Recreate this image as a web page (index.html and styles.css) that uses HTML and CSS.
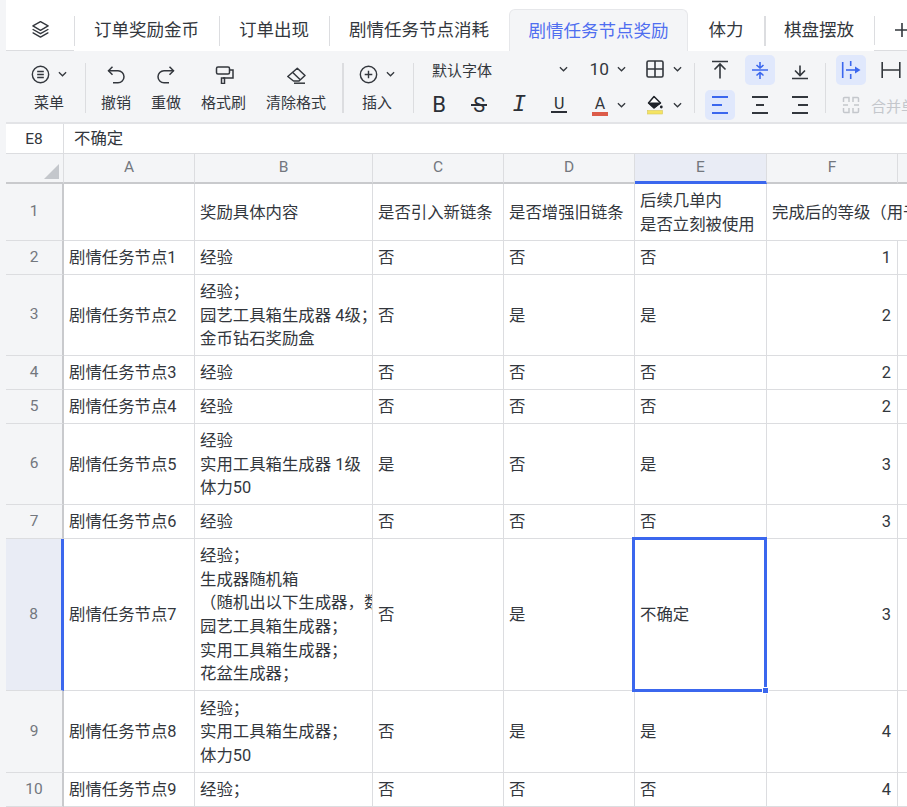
FILE: index.html
```html
<!DOCTYPE html>
<html lang="zh-CN">

<head>
    <meta charset="UTF-8">
    <title>剧情任务节点奖励</title>
    <link rel="stylesheet" href="styles.css">
</head>

<body>
    <div class="app">
        <!-- sheet tabs -->
        <div class="tabs">
            <div class="tab-icon">
                <svg width="19" height="19" viewBox="0 0 20 20" fill="none" stroke="#33373d" stroke-width="1.5" stroke-linejoin="round" stroke-linecap="round">
                    <path d="M10 1.800 18 6.300 10 10.800 2 6.300Z"/>
                    <path d="M2.200 10 10 14.400 17.800 10"/>
                    <path d="M2.200 13.600 10 18 17.800 13.600"/>
                </svg>
            </div>
            <div class="tab">订单奖励金币</div>
            <div class="tab">订单出现</div>
            <div class="tab">剧情任务节点消耗</div>
            <div class="tab active">剧情任务节点奖励</div>
            <div class="tab tab-short">体力</div>
            <div class="tab tab-thick">棋盘摆放</div>
            <div class="tab tab-add">
                <svg width="14" height="14" viewBox="0 0 14 14" stroke="#33373d" stroke-width="1.6"><path d="M7 0v14M0 7h14"/></svg>
            </div>
        </div>

        <!-- toolbar -->
        <div class="toolbar">
            <div class="tool-group">
                <div class="tool-big">
                    <div class="tool-top">
                        <svg width="19" height="19" viewBox="0 0 20 20" fill="none" stroke="#33373d" stroke-width="1.5"><circle cx="10" cy="10" r="8.600"/><path d="M6.500 6.800h7M6.500 10h7M6.500 13.200h7"/></svg>
                        <svg class="caret" width="9" height="6" viewBox="0 0 10 6"><path d="M1 1l4 4 4-4"/></svg>
                    </div>
                    <span>菜单</span>
                </div>
            </div>
            <div class="sep"></div>
            <div class="tool-group gap-20">
                <div class="tool-big">
                    <div class="tool-top">
                        <svg width="20" height="20" viewBox="0 0 20 20" fill="none" stroke="#33373d" stroke-width="1.500"><path d="M6.500 2.700 2.500 6.700 6.500 10.700"/><path d="M2.500 6.700H12a6 6 0 0 1 0 12H7"/></svg>
                    </div>
                    <span>撤销</span>
                </div>
                <div class="tool-big">
                    <div class="tool-top">
                        <svg width="20" height="20" viewBox="0 0 20 20" fill="none" stroke="#33373d" stroke-width="1.500"><path d="M13.500 2.700l4 4-4 4"/><path d="M17.500 6.700H8a6 6 0 0 0 0 12h5"/></svg>
                    </div>
                    <span>重做</span>
                </div>
                <div class="tool-big">
                    <div class="tool-top">
                        <svg width="20" height="20" viewBox="0 0 20 20" fill="none" stroke="#33373d" stroke-width="1.500"><rect x="2.500" y="3" width="13" height="7" rx="1.500"/><path d="M15.500 6H19v8H9"/><path d="M7.500 14h3v5.500h-3Z"/></svg>
                    </div>
                    <span>格式刷</span>
                </div>
                <div class="tool-big">
                    <div class="tool-top">
                        <svg width="20" height="20" viewBox="0 0 20 20" fill="none" stroke="#33373d" stroke-width="1.500" stroke-linejoin="round"><path d="M11.300 4.300 19 11.500 13 17H7.500L1.800 12.500Z"/><path d="M6.500 8.300l7.500 7.200"/><path d="M8 19.200h11"/></svg>
                    </div>
                    <span>清除格式</span>
                </div>
            </div>
            <div class="sep sep-thick"></div>
            <div class="tool-group">
                <div class="tool-big">
                    <div class="tool-top">
                        <svg width="19" height="19" viewBox="0 0 20 20" fill="none" stroke="#33373d" stroke-width="1.500"><circle cx="10" cy="10" r="8.600"/><path d="M10 6v8M6 10h8"/></svg>
                        <svg class="caret" width="9" height="6" viewBox="0 0 10 6"><path d="M1 1l4 4 4-4"/></svg>
                    </div>
                    <span>插入</span>
                </div>
            </div>
            <div class="sep"></div>

            <!-- font controls -->
            <div class="font-tools">
                <div class="font-row">
                    <div class="font-name">默认字体
                        <svg class="caret" width="9" height="6" viewBox="0 0 10 6"><path d="M1 1l4 4 4-4"/></svg>
                    </div>
                    <div class="font-size">10
                        <svg class="caret" width="9" height="6" viewBox="0 0 10 6"><path d="M1 1l4 4 4-4"/></svg>
                    </div>
                    <div class="font-border">
                        <svg width="18" height="18" viewBox="0 0 18 18" fill="none" stroke="#33373d" stroke-width="1.600"><rect x="1" y="1" width="16" height="16" rx="1.500"/><path d="M9 1v16M1 9h16"/></svg>
                        <svg class="caret" width="9" height="6" viewBox="0 0 10 6"><path d="M1 1l4 4 4-4"/></svg>
                    </div>
                </div>
                <div class="font-row font-row-2">
                    <span class="glyph glyph-b">B</span>
                    <span class="glyph glyph-s">S</span>
                    <span class="glyph glyph-i">I</span>
                    <span class="glyph glyph-u">U</span>
                    <div class="color-btn">
                        <span class="color-a">A</span>
                        <svg class="caret" width="9" height="6" viewBox="0 0 10 6"><path d="M1 1l4 4 4-4"/></svg>
                    </div>
                    <div class="color-btn fill-btn">
                        <svg width="16" height="20" viewBox="0 0 16 20"><path d="M7 1.500 13.500 8 7 13 1.500 8Z" fill="#fff" stroke="#1f2329" stroke-width="1.500" stroke-linejoin="round"/><path d="M1.500 8h12L7 13Z" fill="#1f2329" stroke="#1f2329"/><circle cx="14.300" cy="12" r="1.400" fill="#1f2329"/><rect x=".5" y="15.500" width="15" height="3.500" fill="#f5e462" stroke="#d8c95a" stroke-width=".6"/></svg>
                        <svg class="caret" width="9" height="6" viewBox="0 0 10 6"><path d="M1 1l4 4 4-4"/></svg>
                    </div>
                </div>
            </div>
            <div class="sep"></div>

            <!-- alignment -->
            <div class="align-tools">
                <div class="icon-btn">
                    <svg width="18" height="20" viewBox="0 0 18 20" fill="none" stroke="#33373d" stroke-width="1.600"><path d="M1 1.500h16M9 18.500V4M3.500 9.500 9 4l5.500 5.500"/></svg>
                </div>
                <div class="icon-btn on">
                    <svg width="18" height="20" viewBox="0 0 18 20" fill="none" stroke="#3b67ee" stroke-width="1.600"><path d="M1 10h16M9 2v6M5.500 5 9 8l3.500-3M9 19v-6.500M5.500 15.500 9 12.500l3.500 3"/></svg>
                </div>
                <div class="icon-btn">
                    <svg width="18" height="20" viewBox="0 0 18 20" fill="none" stroke="#33373d" stroke-width="1.600"><path d="M1 18.500h16M9 5.500v10M4 10.500l5 5 5-5"/></svg>
                </div>
                <div class="icon-btn on">
                    <svg width="18" height="18" viewBox="0 0 18 18" fill="none" stroke="#3b67ee" stroke-width="1.800"><path d="M1 1h16M1 9h10M1 17h16"/></svg>
                </div>
                <div class="icon-btn">
                    <svg width="18" height="18" viewBox="0 0 18 18" fill="none" stroke="#33373d" stroke-width="1.800"><path d="M1 1h16M5 9h8M1 17h16"/></svg>
                </div>
                <div class="icon-btn">
                    <svg width="18" height="18" viewBox="0 0 18 18" fill="none" stroke="#33373d" stroke-width="1.800"><path d="M1 1h16M7 9h10M1 17h16"/></svg>
                </div>
            </div>
            <div class="sep"></div>

            <!-- wrap and merge -->
            <div class="wrap-tools">
                <div class="wrap-row">
                    <div class="icon-btn on">
                        <svg width="20" height="20" viewBox="0 0 20 20" fill="none" stroke="#3b67ee" stroke-width="1.600"><path d="M1.700 2v16M9.700 1v5M9.700 14v5"/><path d="M5 10h10"/><path d="M14 6.500 19.500 10 14 13.500Z" fill="#3b67ee" stroke="none"/></svg>
                    </div>
                    <div class="icon-btn">
                        <svg width="20" height="20" viewBox="0 0 20 20" fill="none" stroke="#33373d" stroke-width="1.600"><path d="M1.200 2v16M18.800 2v16M1.200 10h17.600"/></svg>
                    </div>
                </div>
                <div class="merge-row">
                    <svg width="18" height="18" viewBox="0 0 18 18" fill="none" stroke="#c4c7cc" stroke-width="1.500"><path d="M7 6V1.500H2.500a1 1 0 0 0-1 1V6M11 6V1.500h4.500a1 1 0 0 1 1 1V6M7 12v4.500H2.500a1 1 0 0 1-1-1V12M11 12v4.500h4.500a1 1 0 0 0 1-1V12M1 9h5M12 9h5"/></svg>
                    <span>合并单元格</span>
                </div>
            </div>
        </div>

        <!-- formula bar -->
        <div class="formula-bar">
            <div class="cell-name">E8</div>
            <div class="formula">不确定</div>
        </div>

        <!-- sheet -->
        <div class="sheet">
            <table>
                <colgroup>
                    <col class="col-head"><col class="col-a"><col class="col-b"><col class="col-c"><col class="col-d"><col class="col-e"><col class="col-f"><col class="col-g">
                </colgroup>
                <thead>
                    <tr>
                        <th class="corner"><div class="corner-mark"></div></th>
                        <th>A</th><th>B</th><th>C</th><th>D</th><th class="cur-col">E</th><th>F</th><th></th>
                    </tr>
                </thead>
                <tbody>
                    <tr class="h-57">
                        <th>1</th><td></td><td>奖励具体内容</td><td>是否引入新链条</td><td>是否增强旧链条</td>
                        <td>后续几单内<br>是否立刻被使用</td>
                        <td colspan="2">完成后的等级（用于判断解锁）</td>
                    </tr>
                    <tr class="h-34">
                        <th>2</th><td>剧情任务节点1</td><td>经验</td><td>否</td><td>否</td><td>否</td><td class="num">1</td><td></td>
                    </tr>
                    <tr class="h-81">
                        <th>3</th><td>剧情任务节点2</td><td>经验；<br>园艺工具箱生成器 4级；<br>金币钻石奖励盒</td><td>否</td><td>是</td><td>是</td><td class="num">2</td><td></td>
                    </tr>
                    <tr class="h-34">
                        <th>4</th><td>剧情任务节点3</td><td>经验</td><td>否</td><td>否</td><td>否</td><td class="num">2</td><td></td>
                    </tr>
                    <tr class="h-34">
                        <th>5</th><td>剧情任务节点4</td><td>经验</td><td>否</td><td>否</td><td>否</td><td class="num">2</td><td></td>
                    </tr>
                    <tr class="h-81">
                        <th>6</th><td>剧情任务节点5</td><td>经验<br>实用工具箱生成器 1级<br>体力50</td><td>是</td><td>否</td><td>是</td><td class="num">3</td><td></td>
                    </tr>
                    <tr class="h-34">
                        <th>7</th><td>剧情任务节点6</td><td>经验</td><td>否</td><td>否</td><td>否</td><td class="num">3</td><td></td>
                    </tr>
                    <tr class="h-152">
                        <th class="cur-row">8</th><td>剧情任务节点7</td>
                        <td>经验；<br>生成器随机箱<br>（随机出以下生成器，数量随机）<br>园艺工具箱生成器；<br>实用工具箱生成器；<br>花盆生成器；</td>
                        <td>否</td><td>是</td>
                        <td class="selected">不确定<div class="sel-frame"><div class="fill-handle"></div></div></td>
                        <td class="num">3</td><td></td>
                    </tr>
                    <tr class="h-82">
                        <th>9</th><td>剧情任务节点8</td><td>经验；<br>实用工具箱生成器；<br>体力50</td><td>否</td><td>是</td><td>是</td><td class="num">4</td><td></td>
                    </tr>
                    <tr class="h-34">
                        <th>10</th><td>剧情任务节点9</td><td>经验；</td><td>否</td><td>否</td><td>否</td><td class="num">4</td><td></td>
                    </tr>
                </tbody>
            </table>
        </div>
    </div>
</body>

</html>
```

FILE: styles.css
```css
/* Basic reset */
* {
    margin: 0;
    padding: 0;
    box-sizing: border-box;
}

:root {
    --panel: #f4f5f7;
    --line: #dcdde0;
    --text: #33373d;
    --blue: #3b67ee;
    --blue-soft: #e0e8fc;
}

html,
body {
    height: 100%;
    overflow: hidden;
}

body {
    font-family: Roboto, "Noto Sans CJK SC", sans-serif;
    color: var(--text);
    background: #fff;
}

.app {
    width: 907px;
    height: 807px;
    background: #fff;
    border-left: 6px solid var(--panel);
    overflow: hidden;
}

/* Tabs */
.tabs {
    display: flex;
    align-items: stretch;
    height: 51px;
    padding-top: 9px;
    overflow: hidden;
}

.tab-icon {
    width: 68px;
    flex-shrink: 0;
    display: flex;
    align-items: center;
    justify-content: center;
    border-bottom: 1px solid var(--line);
}

.tab {
    position: relative;
    flex-shrink: 0;
    display: flex;
    align-items: center;
    justify-content: center;
    font-size: 17.5px;
    padding: 2px 20px 0;
    white-space: nowrap;
    line-height: 1;
}

.tab::before {
    content: "";
    position: absolute;
    left: 0;
    top: 7px;
    bottom: 5px;
    width: 1px;
    background: var(--line);
}

.tab.active {
    color: #4f6ef0;
    background: var(--panel);
    border: 1px solid #e6e7ea;
    border-bottom: none;
    border-radius: 6px 6px 0 0;
    padding: 2px 18.5px 0;
}

.tab.active::before,
.tab-short::before {
    display: none;
}

.tab-short {
    padding: 2px 20.5px 0;
}

.tab-thick::before {
    width: 2px;
}

.tab-add {
    padding: 0 0 0 21px;
    justify-content: flex-start;
    flex: 1 0 auto;
    border-bottom: 1px solid var(--line);
}

/* Toolbar */
.toolbar {
    display: flex;
    align-items: flex-start;
    height: 73px;
    background: var(--panel);
    border-bottom: 2px solid #e3e4e7;
    padding-left: 25px;
    padding-top: 12px;
    white-space: nowrap;
    overflow: hidden;
}

.tool-group {
    display: flex;
    flex-shrink: 0;
}

.gap-20 {
    gap: 20px;
}

.tool-big {
    display: flex;
    flex-direction: column;
    align-items: center;
    font-size: 15px;
    line-height: 20px;
}

.tool-top {
    height: 22px;
    display: flex;
    align-items: center;
    gap: 8px;
    margin-bottom: 8px;
}

.caret {
    fill: none;
    stroke: #33373d;
    stroke-width: 1.4;
    flex-shrink: 0;
}

.sep {
    width: 1px;
    height: 50px;
    margin: 0 15px 0 18px;
    background: #dcdde0;
    flex-shrink: 0;
}

.sep-thick {
    width: 2px;
    margin-left: 16px;
}

/* Font controls */
.font-tools {
    width: 250px;
    flex-shrink: 0;
    margin: -5px -6px 0 3px;
}

.font-row {
    display: flex;
    align-items: center;
    height: 22px;
    font-size: 15px;
}

.font-name {
    width: 136px;
    display: flex;
    align-items: center;
    justify-content: space-between;
}

.font-size {
    width: 58px;
    display: flex;
    align-items: center;
    justify-content: flex-end;
    gap: 8px;
    font-size: 17.33px;
}

.font-border {
    width: 56px;
    display: flex;
    align-items: center;
    justify-content: flex-end;
    gap: 9px;
}

.font-row-2 {
    margin: 13px 0 0 -13px;
    height: 24px;
}

.glyph {
    position: relative;
    width: 40px;
    text-align: center;
    font-size: 16px;
    line-height: 24px;
    color: #2b2f36;
}

.glyph-b {
    font-size: 22px;
}

.glyph-s {
    font-size: 20px;
}

.glyph-s::after {
    content: "";
    position: absolute;
    left: 12px;
    width: 16px;
    top: 11px;
    height: 1.5px;
    background: #2b2f36;
}

.glyph-i {
    font-family: "Liberation Mono", monospace;
    font-style: italic;
    font-size: 23px;
}

.glyph-u {
    line-height: 22px;
    height: 24px;
}

.glyph-u::after {
    content: "";
    position: absolute;
    left: 12px;
    width: 16px;
    top: 18px;
    height: 2px;
    background: #2b2f36;
}

.color-btn {
    display: flex;
    align-items: center;
    gap: 9px;
    margin-left: 13px;
}

.color-a {
    width: 16px;
    height: 22px;
    text-align: center;
    font-size: 16px;
    line-height: 19px;
    border-bottom: 4px solid #dc5b49;
}

.fill-btn {
    margin-left: 21px;
    gap: 10px;
}

/* Alignment */
.align-tools {
    display: grid;
    grid-template-columns: repeat(3, 30px);
    gap: 5px 10px;
    margin: -8px -8px 0 -5px;
    flex-shrink: 0;
}

.icon-btn {
    width: 30px;
    height: 30px;
    border-radius: 5px;
    display: flex;
    align-items: center;
    justify-content: center;
}

.icon-btn.on {
    background: var(--blue-soft);
}

.wrap-tools {
    margin: -8px 0 0 -5px;
    flex-shrink: 0;
}

.wrap-row {
    display: flex;
    gap: 10px;
}

.merge-row {
    display: flex;
    align-items: center;
    gap: 11px;
    margin-top: 5px;
    height: 30px;
    padding-left: 6px;
    font-size: 15px;
    color: #c4c7cc;
}

/* Formula bar */
.formula-bar {
    display: flex;
    height: 30px;
    border-bottom: 1px solid var(--line);
    font-size: 16.4px;
    line-height: 30px;
}

.cell-name {
    width: 58px;
    flex-shrink: 0;
    text-align: center;
    font-size: 15.5px;
    padding-right: 1px;
    border-right: 1px solid var(--line);
}

.formula {
    padding-left: 10px;
}

/* Sheet */
table {
    border-collapse: separate;
    border-spacing: 0;
    table-layout: fixed;
    width: 1000px;
    font-size: 16.4px;
    line-height: 23.6px;
}

.col-head { width: 58px; }
.col-a { width: 131px; }
.col-b { width: 178px; }
.col-c { width: 131px; }
.col-d { width: 131px; }
.col-e { width: 132px; }
.col-f { width: 131px; }
.col-g { width: 108px; }

th {
    background: var(--panel);
    font-weight: 400;
    font-size: 15.5px;
    color: #73777e;
    border-right: 1px solid var(--line);
    border-bottom: 1px solid var(--line);
    text-align: center;
}

thead th {
    height: 30px;
    border-bottom: 2px solid #c9cacd;
}

tbody th {
    border-right: 2px solid #c9cacd;
}

td {
    border-right: 1px solid var(--line);
    border-bottom: 1px solid var(--line);
    padding: 1px 5px 0;
    white-space: nowrap;
    overflow: hidden;
    vertical-align: middle;
}

.h-34 { height: 34px; }
.h-57 { height: 57px; }
.h-81 { height: 81px; }
.h-82 { height: 82px; }
.h-152 { height: 152px; }

.num {
    text-align: right;
    padding-right: 6px;
}

.corner {
    position: relative;
}

.corner-mark {
    position: absolute;
    right: 4px;
    bottom: 3px;
    width: 15px;
    height: 15px;
    background: #c4c7cc;
    clip-path: polygon(100% 0, 100% 100%, 0 100%);
}

thead th.cur-col {
    background: #e9ecf5;
    border-bottom: 3px solid var(--blue);
}

tbody th.cur-row {
    background: #e9ecf5;
    border-right: 3px solid var(--blue);
}

/* Selected cell */
.selected {
    position: relative;
    overflow: visible;
}

.sel-frame {
    position: absolute;
    left: -3px;
    right: -1px;
    top: -2px;
    bottom: -2px;
    border: 3px solid var(--blue);
}

.fill-handle {
    position: absolute;
    right: -5px;
    bottom: -5px;
    width: 7px;
    height: 7px;
    background: var(--blue);
    border: 1px solid #fff;
}
```
